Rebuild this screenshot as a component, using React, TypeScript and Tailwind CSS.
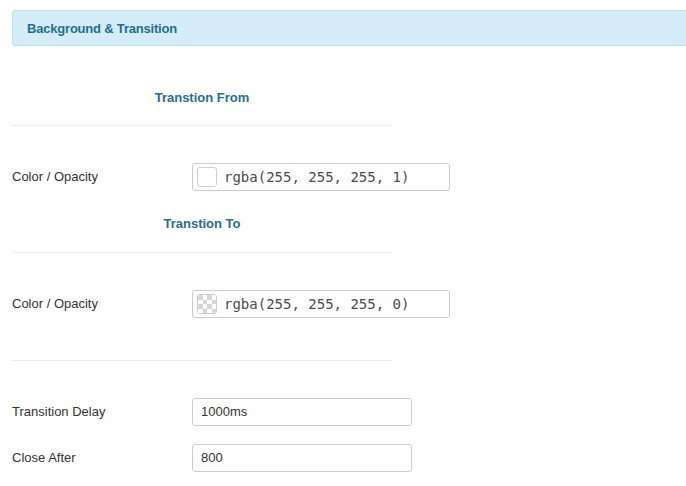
import React from "react";

const sans = { fontFamily: '"Liberation Sans", Arial, sans-serif' };

function Checker() {
  return (
    <div className="w-[20px] h-[20px] rounded-[3px] border border-[#cfcfcf] overflow-hidden grid grid-cols-4 grid-rows-4 shrink-0">
      {Array.from({ length: 16 }).map((_, i) => {
        const r = Math.floor(i / 4);
        const c = i % 4;
        const dark = (r + c) % 2 === 0;
        return <div key={i} className={dark ? "bg-[#d6d6d6]" : "bg-white"} />;
      })}
    </div>
  );
}

function ColorInput({ value, transparent }: { value: string; transparent?: boolean }) {
  return (
    <div className="w-[258px] h-[28px] border border-[#cccccc] rounded-[3px] flex items-center pl-[4px] gap-[7px] bg-white">
      {transparent ? (
        <Checker />
      ) : (
        <div className="w-[20px] h-[20px] rounded-[3px] border border-[#cfcfcf] bg-white shrink-0" />
      )}
      <span
        className="text-[14px] text-[#4a4a4a] whitespace-pre"
        style={{ fontFamily: '"DejaVu Sans Mono", "Liberation Mono", monospace' }}
      >
        {value}
      </span>
    </div>
  );
}

function TextInput({ value }: { value: string }) {
  return (
    <div className="w-[220px] h-[28px] border border-[#cccccc] rounded-[3px] flex items-center px-[8px] bg-white text-[13px] text-[#333333]">
      {value}
    </div>
  );
}

function Row({ label, children, className }: { label: string; children: React.ReactNode; className?: string }) {
  return (
    <div className={"flex items-center h-[28px] " + (className ?? "")}>
      <div className="w-[180px] text-[13px] text-[#333333]">{label}</div>
      {children}
    </div>
  );
}

export default function App() {
  return (
    <div className="w-[686px] h-[486px] bg-white overflow-hidden pl-[12px]" style={sans}>
      <div className="mt-[10px] h-[36px] w-[700px] bg-[#d5edf8] border border-[#b0e5f2] rounded-[3px] flex items-center pl-[14px] pt-[1px]">
        <span className="text-[13px] font-bold text-[#1f6f8f] tracking-[-0.2px]">Background &amp; Transition</span>
      </div>

      <div className="w-[380px]">
        <div className="mt-[42px] h-[20px] leading-[20px] text-center text-[13px] font-bold text-[#256f8f]">
          Transtion From
        </div>
        <div className="mt-[17px] border-t border-[#ececec]" />
      </div>
      <Row label="Color / Opacity" className="mt-[37px]">
        <ColorInput value="rgba(255, 255, 255, 1)" />
      </Row>

      <div className="w-[380px]">
        <div className="mt-[23px] h-[20px] leading-[20px] text-center text-[13px] font-bold text-[#256f8f]">
          Transtion To
        </div>
        <div className="mt-[18px] border-t border-[#ececec]" />
      </div>
      <Row label="Color / Opacity" className="mt-[37px]">
        <ColorInput value="rgba(255, 255, 255, 0)" transparent />
      </Row>

      <div className="w-[380px] mt-[42px] border-t border-[#ececec]" />

      <Row label="Transition Delay" className="mt-[37px]">
        <TextInput value="1000ms" />
      </Row>
      <Row label="Close After" className="mt-[18px]">
        <TextInput value="800" />
      </Row>
    </div>
  );
}
